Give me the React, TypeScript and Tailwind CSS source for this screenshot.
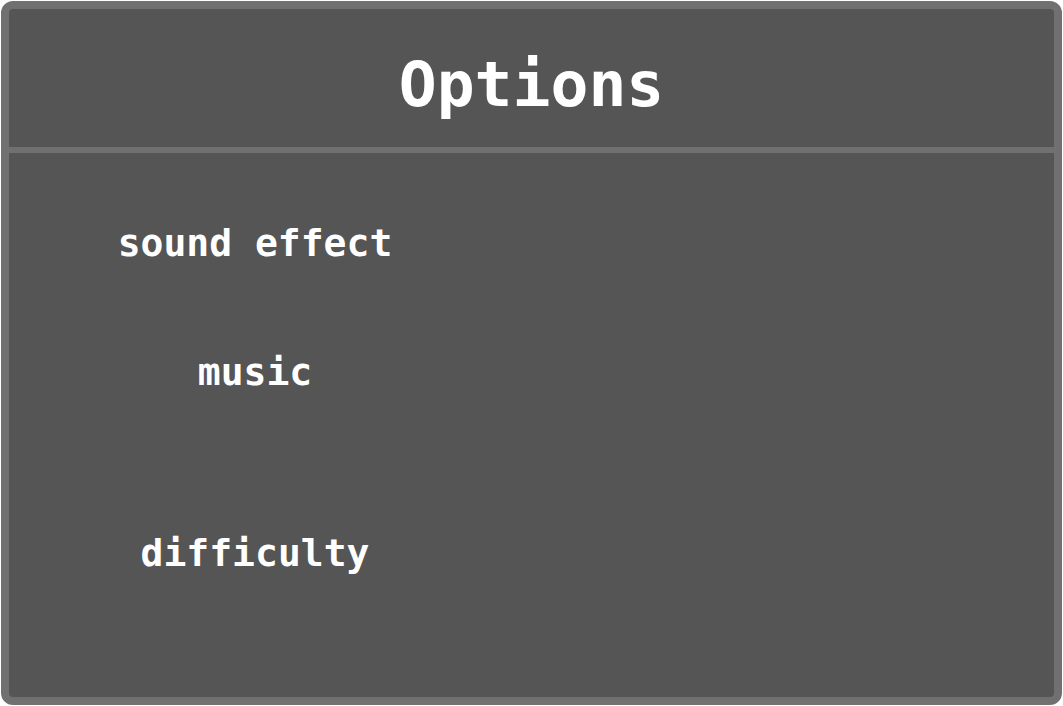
const pixelFont = "font-['DejaVu_Sans_Mono','Liberation_Mono',monospace]";

const rows = [
  { label: "sound effect", gap: "mt-[68px]" },
  { label: "music", gap: "mt-[85px]" },
  { label: "difficulty", gap: "mt-[137px]" },
];

export default function App() {
  return (
    <div className="h-[706px] w-[1063px] bg-white p-px">
      <div className="flex h-full flex-col rounded-[12px] border-8 border-[#707070] bg-[#555555]">
        <header className="flex h-[144px] shrink-0 items-center justify-center border-b-[6px] border-[#707070] pt-[12px]">
          <h1 className={`${pixelFont} text-[63px] leading-none font-bold text-white`}>
            Options
          </h1>
        </header>
        <section className="flex-1">
          {rows.map((row) => (
            <div key={row.label} className={`${row.gap} w-[492px] text-center`}>
              <span
                className={`${pixelFont} text-[38px] leading-[44px] font-bold text-white`}
              >
                {row.label}
              </span>
            </div>
          ))}
        </section>
      </div>
    </div>
  );
}
